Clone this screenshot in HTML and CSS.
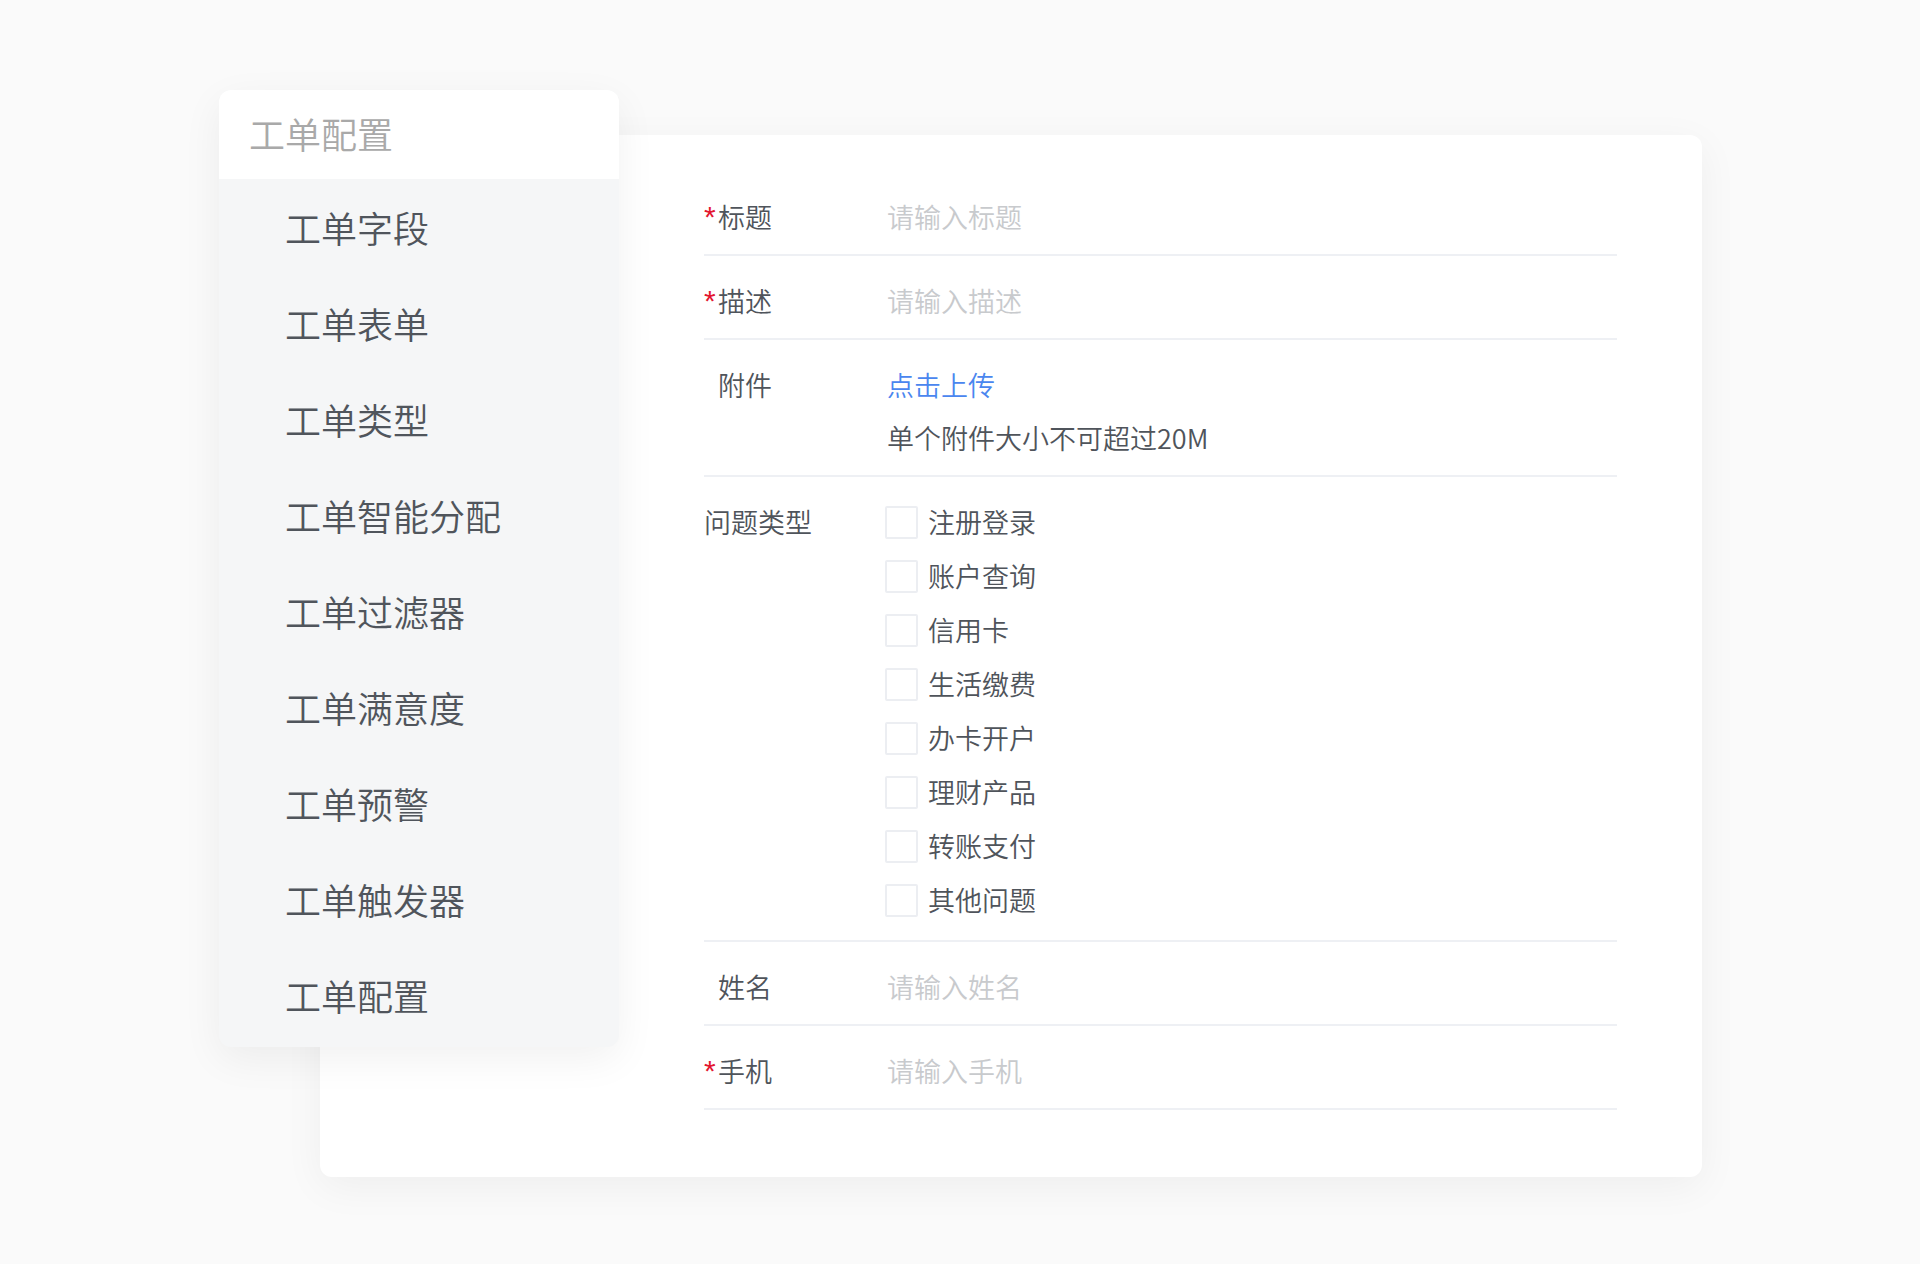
FILE: index.html
```html
<!DOCTYPE html>
<html lang="zh-CN">
<head>
<meta charset="utf-8">
<title>工单配置</title>
<link rel="stylesheet" href="styles.css">
</head>
<body>
<div class="stage">
  <aside class="menu">
    <div class="menu-head">工单配置</div>
    <ul class="menu-list">
      <li>工单字段</li>
      <li>工单表单</li>
      <li>工单类型</li>
      <li>工单智能分配</li>
      <li>工单过滤器</li>
      <li>工单满意度</li>
      <li>工单预警</li>
      <li>工单触发器</li>
      <li>工单配置</li>
    </ul>
  </aside>
  <section class="panel">
    <div class="form">
      <div class="row">
        <div class="label"><span class="req">*</span>标题</div>
        <div class="value placeholder">请输入标题</div>
      </div>
      <div class="row">
        <div class="label"><span class="req">*</span>描述</div>
        <div class="value placeholder">请输入描述</div>
      </div>
      <div class="row">
        <div class="label"><span class="req hidden">*</span>附件</div>
        <div class="value stack">
          <span class="link">点击上传</span>
          <span class="note">单个附件大小不可超过20M</span>
        </div>
      </div>
      <div class="row row-type">
        <div class="label">问题类型</div>
        <div class="value options">
          <label class="option"><span class="box"></span>注册登录</label>
          <label class="option"><span class="box"></span>账户查询</label>
          <label class="option"><span class="box"></span>信用卡</label>
          <label class="option"><span class="box"></span>生活缴费</label>
          <label class="option"><span class="box"></span>办卡开户</label>
          <label class="option"><span class="box"></span>理财产品</label>
          <label class="option"><span class="box"></span>转账支付</label>
          <label class="option"><span class="box"></span>其他问题</label>
        </div>
      </div>
      <div class="row">
        <div class="label"><span class="req hidden">*</span>姓名</div>
        <div class="value placeholder">请输入姓名</div>
      </div>
      <div class="row">
        <div class="label"><span class="req">*</span>手机</div>
        <div class="value placeholder">请输入手机</div>
      </div>
    </div>
  </section>
</div>
</body>
</html>
```

FILE: styles.css
```css
html, body {
  margin: 0;
  padding: 0;
}
body {
  background: #fafafa;
  font-family: "Noto Sans CJK SC", "Noto Sans", sans-serif;
  font-weight: 350;
  width: 1920px;
  height: 1264px;
  overflow: hidden;
}
.stage {
  display: grid;
  padding: 90px 0 0 219px;
  align-items: start;
  justify-items: start;
}
.menu, .panel {
  grid-area: 1 / 1;
}
.menu {
  position: relative;
  z-index: 2;
  width: 400px;
  background: #f5f6f7;
  border-radius: 12px;
  overflow: hidden;
  box-shadow: 0 12px 40px rgba(0, 0, 0, 0.06);
}
.menu-head {
  height: 89px;
  line-height: 87px;
  padding-bottom: 2px;
  box-sizing: border-box;
  background: #ffffff;
  padding-left: 30px;
  font-size: 36px;
  color: #a9a9a9;
}
.menu-list {
  list-style: none;
  margin: 0;
  padding: 0 0 4px;
}
.menu-list li {
  height: 96px;
  line-height: 96px;
  padding-left: 66px;
  font-size: 36px;
  color: #50555c;
}
.panel {
  margin: 45px 0 0 101px;
  width: 1382px;
  box-sizing: border-box;
  padding: 37px 85px 67px 384px;
  background: #ffffff;
  border-radius: 12px;
  box-shadow: 0 10px 40px rgba(0, 0, 0, 0.05);
}
.form {
  display: flex;
  flex-direction: column;
}
.row {
  display: flex;
  padding: 25px 0 17px;
  border-bottom: 2px solid #eef0f4;
  font-size: 27px;
  line-height: 40px;
}
.row-type {
  padding-bottom: 20px;
}
.label {
  flex: none;
  width: 183px;
  color: #4f545b;
}
.req {
  color: #e3152f;
  display: inline-block;
  width: 14px;
  font-family: "Liberation Sans", sans-serif;
  font-size: 30px;
  vertical-align: top;
}
.req.hidden {
  visibility: hidden;
}
.value {
  flex: 1;
  color: #4f545b;
}
.placeholder {
  color: #c8cacd;
}
.stack {
  display: flex;
  flex-direction: column;
  gap: 13px;
}
.link {
  color: #4a86ef;
}
.note {
  color: #4f545b;
}
.options {
  display: flex;
  flex-direction: column;
  gap: 14px;
  margin-left: -2px;
}
.option {
  display: flex;
  align-items: center;
  height: 40px;
  color: #4f545b;
}
.box {
  flex: none;
  width: 29px;
  height: 29px;
  border: 2px solid #eceef2;
  border-radius: 2px;
  margin-right: 10px;
}
```
